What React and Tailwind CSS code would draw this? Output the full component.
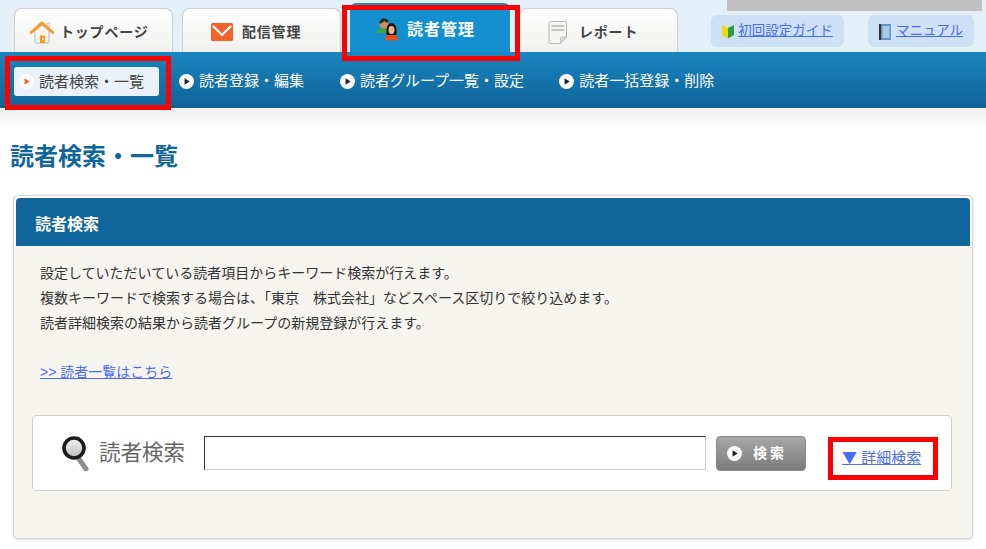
import React from 'react';

const font = { fontFamily: '"Liberation Sans", "Noto Sans CJK JP", sans-serif' };

const HomeIcon = () => (
    <svg width="24" height="23" viewBox="0 0 24 23" className="shrink-0">
        <path d="M5 10 V21 a1 1 0 0 0 1 1 H18 a1 1 0 0 0 1-1 V10 L12 4z" fill="#f7f3ea" stroke="#aaa" strokeWidth="0.8" />
        <path d="M17 2 h2.500 v5 h-2.500z" fill="#f3efe6" stroke="#bbb" strokeWidth="0.6" />
        <rect x="10" y="14.500" width="5" height="7.500" fill="#f59a1c" />
        <rect x="12" y="17" width="1.400" height="2.200" fill="#fff" />
        <path d="M1.200 11.500 L12 1.800 L22.800 11.500" fill="none" stroke="#f79a2c" strokeWidth="3" strokeLinejoin="round" strokeLinecap="round" />
    </svg>
);

const MailIcon = () => (
    <svg width="22" height="18" viewBox="0 0 22 18" className="shrink-0">
        <rect x="0" y="0" width="22" height="18" rx="1.500" fill="#f2622a" />
        <path d="M2 3 L11 12 L20 3" fill="none" stroke="#fff" strokeWidth="2.200" />
    </svg>
);

const PeopleIcon = () => (
    <svg width="24" height="23" viewBox="0 0 24 23" className="shrink-0">
        <path d="M0 15 q1-4.500 5-4.500 h4 q4 0 5 4.500z" fill="#3fa535" />
        <circle cx="8" cy="6" r="4.600" fill="#c98f5f" />
        <path d="M3.500 6 q0-6 5-5.500 q4 0 4 4 q-3 0-4-1.500 q-2 2-5 3z" fill="#2b2a1c" />
        <path d="M9 22.500 q0-5 4-6 h5 q4 1 4 6z" fill="#e8501f" />
        <path d="M10.500 17 q-1-12 5-12 q6 0 5 12z" fill="#1e1712" />
        <ellipse cx="15.500" cy="12" rx="3" ry="4" fill="#f0b48a" />
    </svg>
);

const ReportIcon = () => (
    <svg width="20" height="23" viewBox="0 0 20 23" className="shrink-0">
        <path d="M1 2 a1.500 1.500 0 0 1 1.500-1.500 H17 a1.500 1.500 0 0 1 1.500 1.500 V16 L12.500 22.500 H2.500 a1.500 1.500 0 0 1-1.500-1.500z" fill="#f6f5ef" stroke="#b5b5b5" />
        <path d="M3.500 5 H16 M3.500 9 H16" stroke="#b5b5b5" strokeWidth="1.600" />
        <path d="M12.500 22.500 V17 a1 1 0 0 1 1-1 H18.500z" fill="#ddd" stroke="#b5b5b5" strokeWidth="0.700" />
    </svg>
);

const BeginnerIcon = () => (
    <svg width="12" height="15" viewBox="0 0 12 15" className="shrink-0">
        <path d="M0 1 L6 4 V14.500 L0 11z" fill="#f2d90f" />
        <path d="M12 1 L6 4 V14.500 L12 11z" fill="#2f9e3f" />
    </svg>
);

const BookIcon = () => (
    <svg width="12" height="16" viewBox="0 0 12 16" className="shrink-0">
        <rect x="0" y="0" width="12" height="16" fill="#5d93bd" />
        <rect x="0" y="0" width="2" height="16" fill="#333" />
        <rect x="3.500" y="2" width="7" height="12" fill="#a9cbe2" />
    </svg>
);

const LoupeIcon = () => (
    <svg width="28" height="35" viewBox="0 0 28 35" className="shrink-0">
        <defs>
            <linearGradient id="lens" x1="0" y1="0" x2="0" y2="1">
                <stop offset="0" stopColor="#f4f4f4" />
                <stop offset="1" stopColor="#bdbdbd" />
            </linearGradient>
        </defs>
        <path d="M17 23 L24 33" stroke="#8a9090" strokeWidth="5" strokeLinecap="round" />
        <circle cx="12" cy="12" r="10" fill="url(#lens)" stroke="#1c1c1c" strokeWidth="3.600" />
    </svg>
);

const PlayDot = ({ dark = '#222' }) => (
    <svg width="15" height="15" viewBox="0 0 14 14" className="shrink-0">
        <circle cx="7" cy="7" r="7" fill="#fff" />
        <path d="M5.200 4 L10 7 L5.200 10z" fill={dark} />
    </svg>
);

const Tab = ({ icon, label, className }) => (
    <div className={`flex h-[44px] w-[159px] items-center rounded-t-[8px] border border-b-0 border-[#cfcfcf] bg-gradient-to-b from-white to-[#f0f0ee] pt-[3px] text-[14px] font-bold text-[#444] ${className}`}>
        {icon}
        <span className="tracking-[0.8px]">{label}</span>
    </div>
);

const SubNavItem = ({ label, className = '' }) => (
    <div className={`flex items-center gap-[5px] text-[15px] text-white ${className}`}>
        <PlayDot />
        <span>{label}</span>
    </div>
);

const App = () => {
    return (
        <div className="relative h-[549px] w-[986px] overflow-hidden bg-white" style={font}>
            {/* header tabs */}
            <div className="relative flex h-[52px] items-end bg-[#e3eff9] pl-[14px]">
                <Tab icon={<HomeIcon />} label="トップページ" className="gap-[6px] pl-[15px]" />
                <Tab icon={<MailIcon />} label="配信管理" className="ml-[9px] gap-[9px] pl-[28px]" />
                <div className="ml-[9px] flex h-[49px] w-[160px] items-center gap-[7px] rounded-t-[6px] bg-[#1390d0] pt-[4px] pl-[26px] text-[16px] font-bold tracking-[1px] text-white">
                    <PeopleIcon />
                    <span>読者管理</span>
                </div>
                <Tab icon={<ReportIcon />} label="レポート" className="ml-[9px] gap-[11px] pl-[28px]" />
                <div className="mb-[5px] ml-[33px] flex h-[32px] w-[133px] items-center justify-center gap-[4px] rounded-[6px] bg-[#cde0f6] pt-[1px] text-[13.5px]">
                    <BeginnerIcon />
                    <a className="text-[#4a6cf7] underline">初回設定ガイド</a>
                </div>
                <div className="mb-[5px] ml-[24px] flex h-[32px] w-[106px] items-center justify-center gap-[5px] rounded-[6px] bg-[#cde0f6] pt-[1px] text-[13.5px]">
                    <BookIcon />
                    <a className="text-[#4a6cf7] underline">マニュアル</a>
                </div>
                <div className="absolute top-0 left-[727px] h-[11px] w-[255px] bg-[#c0c0c0]" />
            </div>

            {/* sub nav */}
            <div className="flex h-[56px] items-center gap-[35px] border-b border-[#0f5e8f] bg-gradient-to-b from-[#1a86bf] to-[#10639a] pt-[3px] pl-[14px]">
                <div className="-mr-[15px] flex h-[29px] w-[145px] items-center gap-[5px] rounded-[3px] bg-[#e9f1fb] pl-[5px] text-[15px] leading-[31px] text-[#444]">
                    <PlayDot dark="#f0662a" />
                    <span className="pt-[1px]">読者検索・一覧</span>
                </div>
                <SubNavItem label="読者登録・編集" className="mr-[1px]" />
                <SubNavItem label="読者グループ一覧・設定" />
                <SubNavItem label="読者一括登録・削除" />
            </div>

            {/* fade under the nav */}
            <div className="h-[22px] border-t border-white bg-gradient-to-b from-[#f0f0f0] to-white" />

            <h1 className="mt-[12px] ml-[10px] text-[24px] leading-[30px] font-bold text-[#10659a]">読者検索・一覧</h1>

            {/* panel */}
            <div className="mx-[13px] mt-[23px] h-[344px] rounded-[5px] border border-[#d4d4d0] bg-[#f5f4ef] shadow-[0_1px_3px_rgba(0,0,0,0.15)]">
                <div className="rounded-t-[5px] bg-white px-[2px] pt-[2px]">
                    <div className="flex h-[48px] items-center rounded-t-[4px] bg-[#10659a] pt-[6px] pl-[19px] text-[16px] font-bold text-white">読者検索</div>
                </div>
                <div className="px-[26px] pt-[15px] text-[14px] leading-[25px] text-[#333]">
                    <p>設定していただいている読者項目からキーワード検索が行えます。</p>
                    <p>複数キーワードで検索する場合は、「東京　株式会社」などスペース区切りで絞り込めます。</p>
                    <p>読者詳細検索の結果から読者グループの新規登録が行えます。</p>
                    <p className="mt-[24px]"><a className="text-[#4a6cf7] underline">&gt;&gt; 読者一覧はこちら</a></p>
                </div>
                <div className="mt-[30px] mr-[20px] ml-[18px] flex h-[76px] items-center rounded-[4px] border border-[#cfcfca] bg-white pl-[29px]">
                    <LoupeIcon />
                    <span className="ml-[9px] text-[21.5px] text-[#666]">読者検索</span>
                    <div className="ml-[19px] h-[34px] w-[502px] border border-[#ccc] border-t-[#333] border-l-[#333] bg-white" />
                    <div className="ml-[10px] flex h-[35px] w-[90px] items-center gap-[11px] rounded-[4px] border border-[#8a8a8a] bg-gradient-to-b from-[#a8a8a8] to-[#7c7c7c] pl-[10px] text-[14px] font-bold tracking-[3px] text-white">
                        <PlayDot />
                        <span>検索</span>
                    </div>
                    <a className="mt-[10px] ml-[36px] text-[15px] text-[#4a6cf7] underline">
                        <span className="font-['Noto_Sans_CJK_JP']">▼</span> 詳細検索
                    </a>
                </div>
            </div>

            {/* red highlight frames */}
            <div className="absolute top-[5px] left-[342px] h-[56px] w-[178px] border-[5px] border-[#f00]" />
            <div className="absolute top-[56px] left-[5px] h-[54px] w-[166px] border-[5px] border-[#f00]" />
            <div className="absolute top-[437px] left-[828px] h-[43px] w-[110px] border-[5px] border-[#f00]" />
        </div>
    );
};

export default App;
